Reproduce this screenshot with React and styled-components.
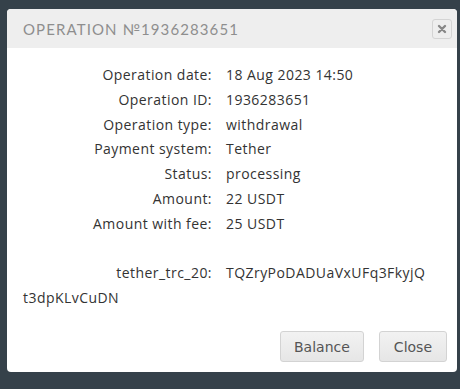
import React from "react";
import styled, { createGlobalStyle } from "styled-components";

const GlobalStyle = createGlobalStyle`
  html, body {
    margin: 0;
    padding: 0;
    background: #35414a;
  }
`;

const Page = styled.div`
  width: 460px;
  height: 389px;
  background: #35414a;
  padding: 9px 3px 0 7px;
  box-sizing: border-box;
`;

const Dialog = styled.div`
  width: 450px;
  height: 363px;
  background: #fff;
  border-radius: 4px;
  overflow: hidden;
  display: flex;
  flex-direction: column;
`;

const Header = styled.div`
  height: 39px;
  background: #eeeeee;
  display: flex;
  align-items: center;
  justify-content: space-between;
  padding: 0 5px 0 16px;
  box-sizing: border-box;
`;

const Title = styled.h2`
  margin: 0;
  font-family: "Lato", "DejaVu Sans", sans-serif;
  font-size: 15px;
  font-weight: 400;
  letter-spacing: 1.1px;
  color: #8e8e8e;
`;

const CloseIcon = styled.button`
  width: 20px;
  height: 20px;
  padding: 0;
  border: 1px solid #d4d4d4;
  border-radius: 3px;
  background: #eeeeee;
  display: flex;
  align-items: center;
  justify-content: center;
`;

const Body = styled.div`
  flex: 1;
  padding: 15px 16px 0 16px;
  font-family: "Open Sans", "Liberation Sans", sans-serif;
  font-size: 14px;
  letter-spacing: 0.45px;
  color: #333;
`;

const Row = styled.div`
  line-height: 24.8px;
  margin-top: ${(p) => (p.$gap ? "24.8px" : "0")};
  overflow-wrap: anywhere;
`;

const Label = styled.span`
  display: inline-block;
  width: 189px;
  text-align: right;
  margin-right: 14px;
`;

const Footer = styled.div`
  display: flex;
  justify-content: flex-end;
  gap: 15px;
  padding: 0 10px 10px 0;
`;

const Button = styled.button`
  height: 31px;
  padding: 0 ${(p) => p.$pad}px;
  border: 1px solid #d3d3d3;
  border-radius: 3px;
  background: linear-gradient(#f2f2f2, #e6e6e6);
  font-family: "DejaVu Sans", "Verdana", sans-serif;
  font-size: 14px;
  color: #555;
`;

const rows = [
  ["Operation date:", "18 Aug 2023 14:50"],
  ["Operation ID:", "1936283651"],
  ["Operation type:", "withdrawal"],
  ["Payment system:", "Tether"],
  ["Status:", "processing"],
  ["Amount:", "22 USDT"],
  ["Amount with fee:", "25 USDT"],
];

export default function App() {
  return (
    <>
      <GlobalStyle />
      <Page>
        <Dialog>
          <Header>
            <Title>OPERATION №1936283651</Title>
            <CloseIcon>
              <svg width="10" height="10" viewBox="0 0 10 10">
                <path d="M2 2L8 8M8 2L2 8" stroke="#888" strokeWidth="2.4" strokeLinecap="round" />
              </svg>
            </CloseIcon>
          </Header>
          <Body>
            {rows.map(([l, v]) => (
              <Row key={l}>
                <Label>{l}</Label>
                {v}
              </Row>
            ))}
            <Row $gap>
              <Label>tether_trc_20:</Label>
              TQZryPoDADUaVxUFq3FkyjQ<wbr />t3dpKLvCuDN
            </Row>
          </Body>
          <Footer>
            <Button $pad={13}>Balance</Button>
            <Button $pad={14}>Close</Button>
          </Footer>
        </Dialog>
      </Page>
    </>
  );
}
